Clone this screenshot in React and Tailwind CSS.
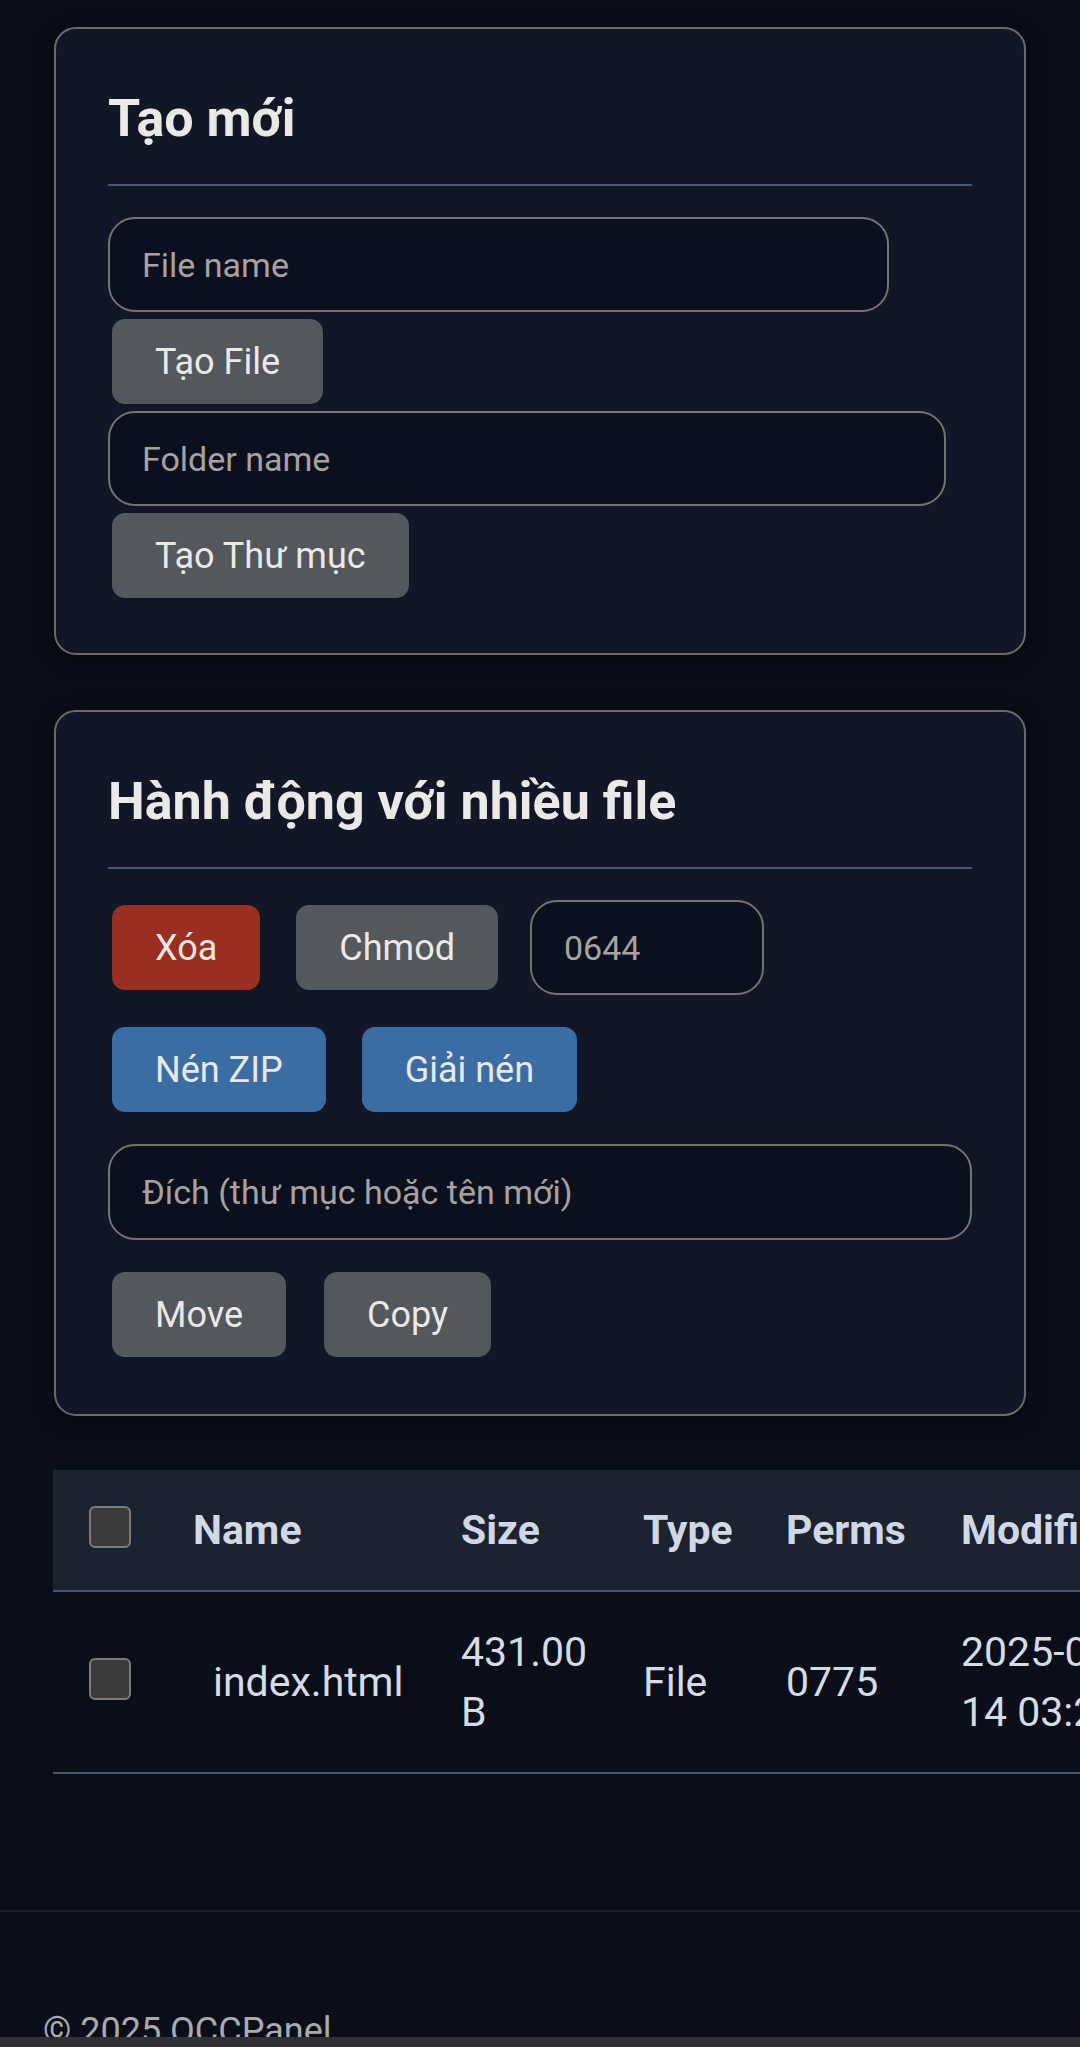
import { useState } from 'react';

const inputCls =
  'h-[95px] rounded-[27px] border-2 border-[#76736e] bg-[#0b101e] px-[32px] text-[34px] text-[#e8e6e3] placeholder:text-[#a8a29e] outline-none';

const checkCls =
  'h-[42px] w-[42px] -translate-y-[6px] appearance-none rounded-[6px] border-2 border-[#7b7b7b] bg-[#3b3b3b] align-middle';

function Btn({ children, color = 'gray', className = '' }) {
  const bg =
    color === 'red' ? 'bg-[#9a2e1f]' : color === 'blue' ? 'bg-[#3a6da3]' : 'bg-[#53585d]';
  return (
    <button
      className={`${bg} ${className} mx-[4px] h-[85px] shrink-0 rounded-[13px] px-[43px] text-[36px] leading-none text-[#ebe9e6]`}
    >
      {children}
    </button>
  );
}

function Card({ title, children, className = '' }) {
  return (
    <div
      className={`rounded-[22px] border-2 border-[#6c6a66] bg-[#111726] px-[52px] pt-[58px] shadow-[0_4px_24px_rgba(0,0,0,0.45)] ${className}`}
    >
      <h2 className="border-b-2 border-[#4a5877] pb-[33px] text-[52px] font-bold leading-[64px] text-[#ebe9e6]">
        {title}
      </h2>
      {children}
    </div>
  );
}

export default function App() {
  const [files] = useState([
    { name: 'index.html', size: '431.00 B', type: 'File', perms: '0775', modified: '2025-06-14 03:21' },
  ]);

  return (
    <div className="relative h-[2047px] w-[1080px] overflow-hidden bg-[#0a0e19] font-['Roboto','Noto_Sans',sans-serif]">
      <div className="px-[54px] pt-[27px]">
        <Card title="Tạo mới" className="pb-[55px]">
          <div className="mt-[31px] flex flex-col items-start">
            <input className={`${inputCls} w-[781px]`} placeholder="File name" />
            <Btn className="mt-[7px]">Tạo File</Btn>
            <input className={`${inputCls} mt-[7px] w-[838px]`} placeholder="Folder name" />
            <Btn className="mt-[7px]">Tạo Thư mục</Btn>
          </div>
        </Card>

        <Card title="Hành động với nhiều file" className="mt-[55px] pb-[57px]">
          <div className="mt-[31px] flex flex-col gap-[32px]">
            <div className="flex items-center gap-[28px]">
              <Btn color="red">Xóa</Btn>
              <Btn>Chmod</Btn>
              <input className={`${inputCls} w-[234px]`} placeholder="0644" />
            </div>
            <div className="flex items-center gap-[28px]">
              <Btn color="blue">Nén ZIP</Btn>
              <Btn color="blue">Giải nén</Btn>
            </div>
            <input className={`${inputCls} h-[96px] w-full`} placeholder="Đích (thư mục hoặc tên mới)" />
            <div className="flex items-center gap-[30px]">
              <Btn>Move</Btn>
              <Btn>Copy</Btn>
            </div>
          </div>
        </Card>

        <table className="mt-[54px] -ml-px w-[1480px] table-fixed border-collapse text-left text-[41px] leading-[60px]">
          <thead>
            <tr className="border-b-2 border-[#4a5670] bg-[#1b2230] text-[#d0d8e4]">
              <th className="w-[113px] py-[30px] pl-[36px]">
                <input type="checkbox" className={checkCls} />
              </th>
              <th className="w-[268px] py-[30px] pl-[27px] font-bold">Name</th>
              <th className="w-[182px] py-[30px] pl-[27px] font-bold">Size</th>
              <th className="w-[143px] py-[30px] pl-[27px] font-bold">Type</th>
              <th className="w-[175px] py-[30px] pl-[27px] font-bold">Perms</th>
              <th className="w-[234px] py-[30px] pl-[27px] font-bold">Modified</th>
              <th className="w-[365px] py-[30px] pl-[27px] font-bold">Actions</th>
            </tr>
          </thead>
          <tbody>
            {files.map((f) => (
              <tr key={f.name} className="border-b-2 border-[#4a5670] text-[#d5dce6]">
                <td className="py-[30px] pl-[36px]">
                  <input type="checkbox" className={checkCls} />
                </td>
                <td className="py-[30px] pl-[47px]">{f.name}</td>
                <td className="py-[30px] pl-[27px] pr-[27px]">{f.size}</td>
                <td className="py-[30px] pl-[27px]">{f.type}</td>
                <td className="py-[30px] pl-[27px]">{f.perms}</td>
                <td className="py-[30px] pl-[27px] pr-[27px]">{f.modified}</td>
                <td className="py-[30px] pl-[27px]">Sửa · Xóa</td>
              </tr>
            ))}
          </tbody>
        </table>
      </div>

      <footer className="mt-[136px] border-t-2 border-[#1d2128] px-[43px] pt-[92px] text-[36px] leading-[54px] text-[#a9aaad]">
        © 2025 OCCPanel
      </footer>

      <div className="absolute bottom-0 left-0 right-0 h-[10px] bg-[#2f3134]" />
    </div>
  );
}
